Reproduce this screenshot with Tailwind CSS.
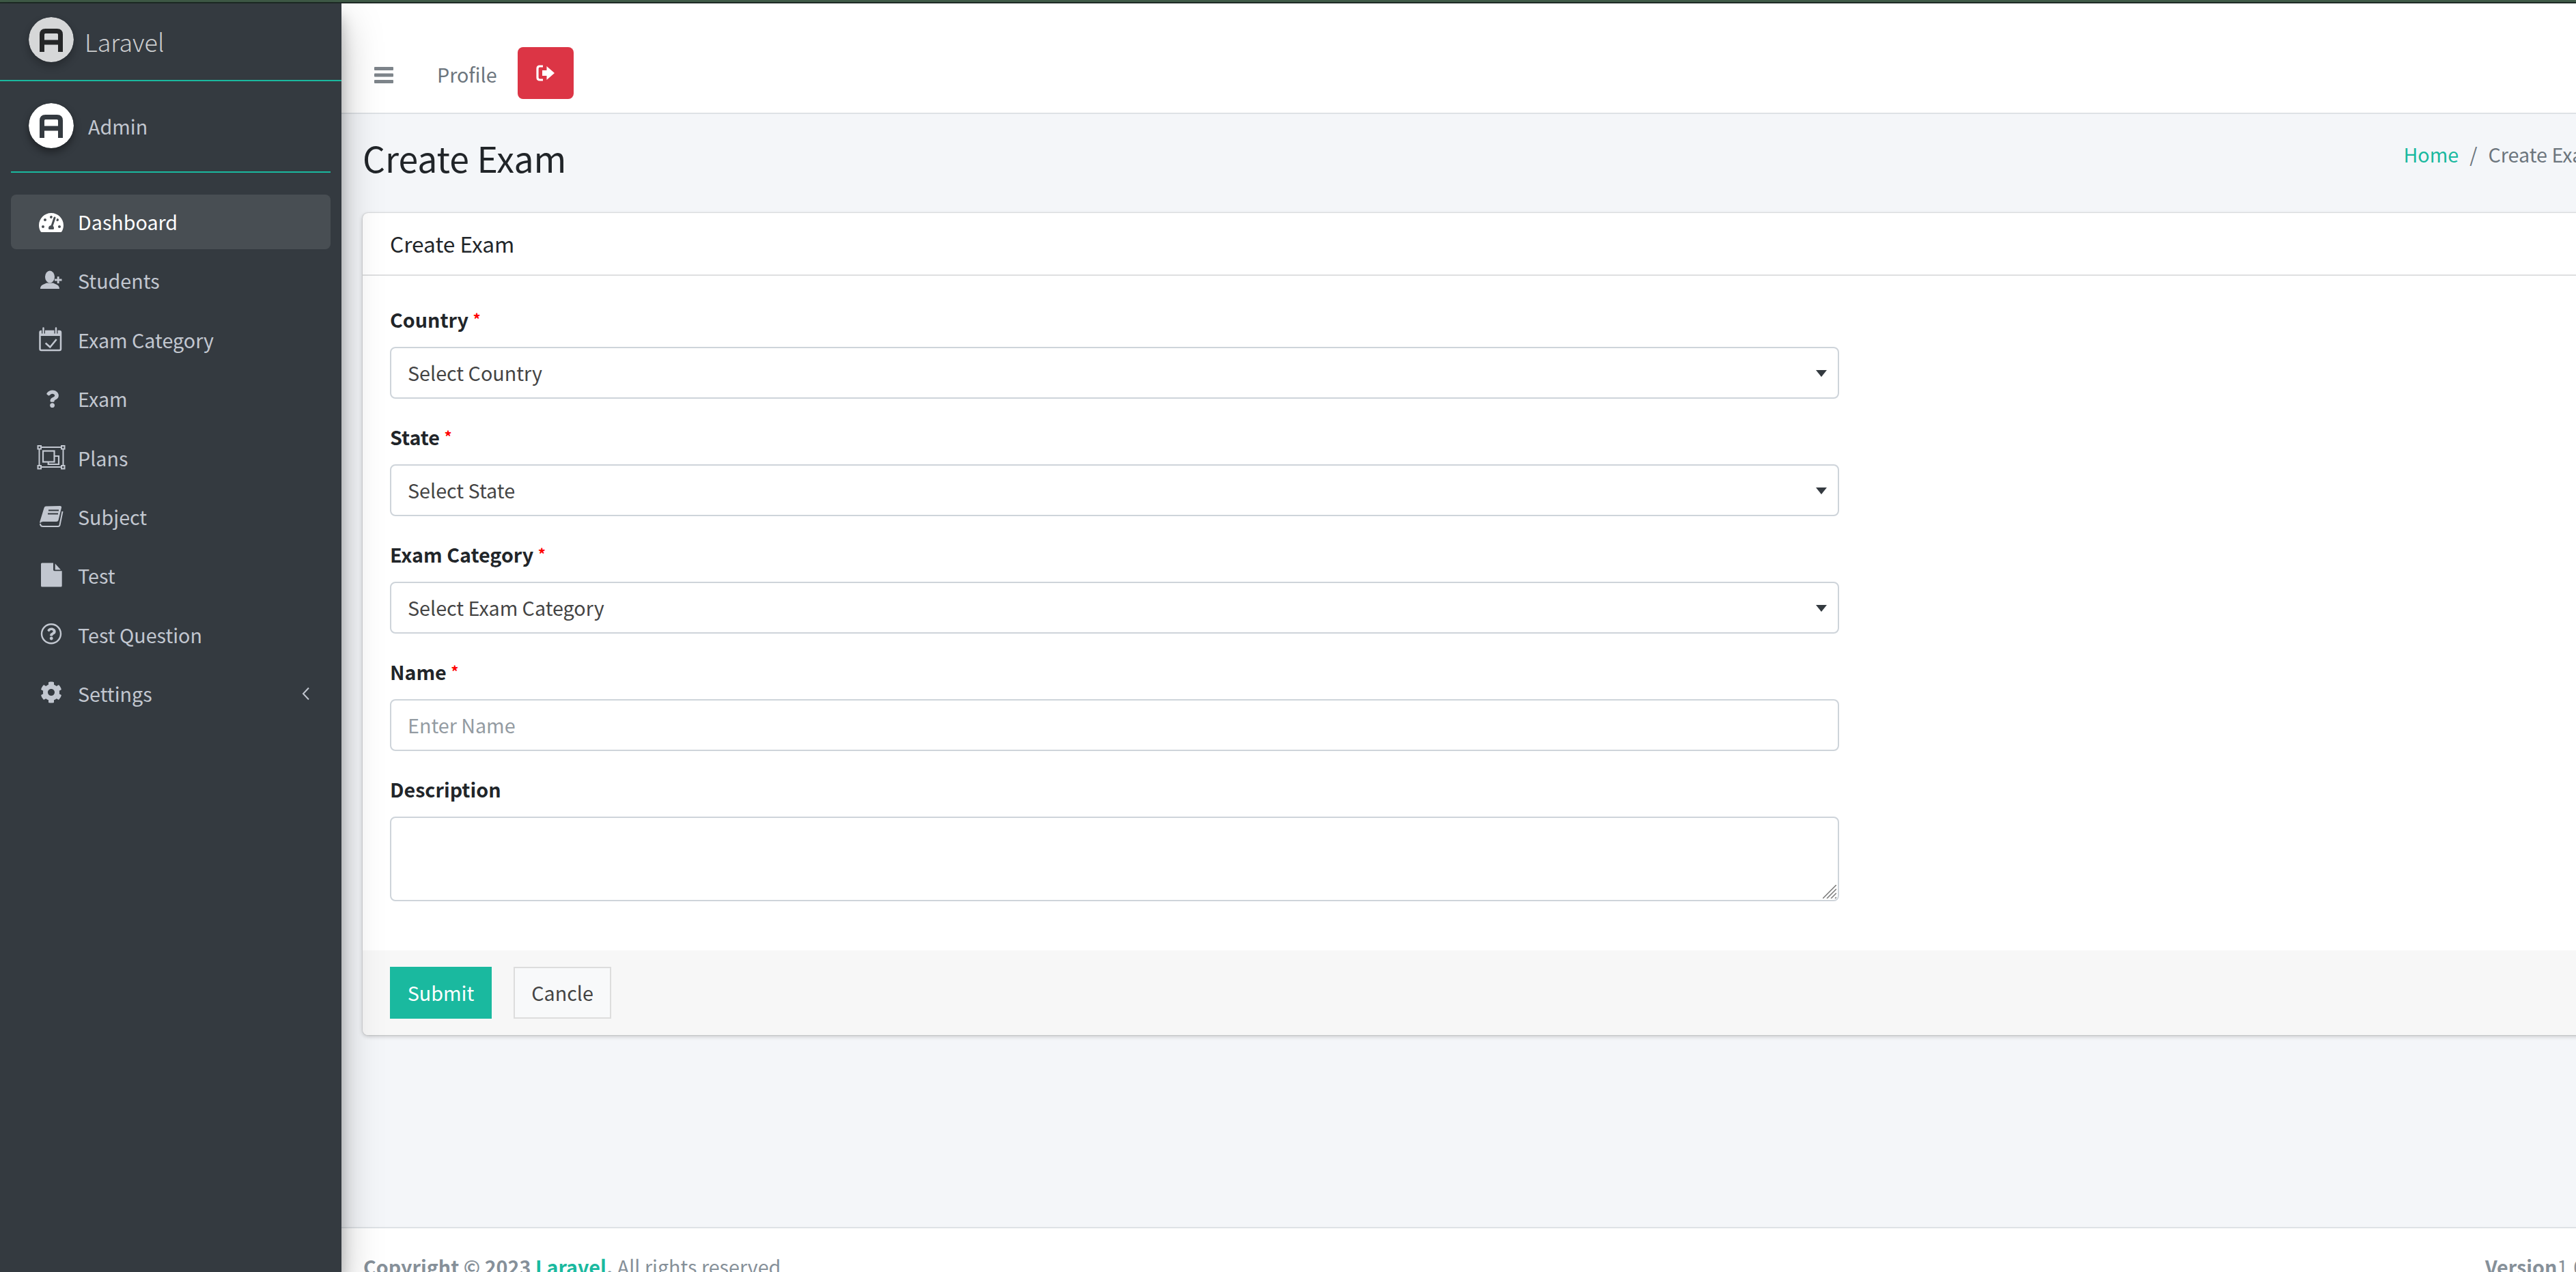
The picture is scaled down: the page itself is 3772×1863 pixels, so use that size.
<!DOCTYPE html>
<html lang="en">

<head>
  <meta charset="UTF-8">
  <meta name="viewport" content="width=device-width, initial-scale=1.0">
  <title>Create Exam</title>
  <script src="https://cdn.jsdelivr.net/npm/@tailwindcss/browser@4"></script>
</head>

<body class="h-[1863px] overflow-hidden bg-white font-['Noto_Sans_CJK_SC','Noto_Sans',sans-serif] text-[28.7px] leading-[48px] text-[#212529]">
  <!-- strip of the browser above the page -->
  <div class="h-[3px] bg-[#3f5a47]"></div>
  <div class="h-[2px] bg-[#1e2a25]"></div>

  <div class="flex h-[1858px] w-[3840px]">
    <!-- sidebar -->
    <aside class="relative z-10 w-[500px] shrink-0 bg-[#343a40] shadow-[0_28px_56px_rgba(0,0,0,.25),0_20px_20px_rgba(0,0,0,.22)]">
      <div class="flex h-[114px] items-center border-b-2 border-[#1ab99f] pl-[42px] pb-[6px]">
        <svg class="size-[66px] rounded-full opacity-80 shadow-[0_6px_12px_rgba(0,0,0,.3)]" viewBox="0 0 66 66">
          <circle cx="33" cy="33" r="33" fill="#fff" />
          <path d="M19.5 51V25.5q0-5 5-5h17q5 0 5 5V51M19.5 37h27" fill="none" stroke="#222" stroke-width="7" />
        </svg>
        <span class="ml-[16px] mt-[3px] text-[35.9px] font-light text-white/75">Laravel</span>
      </div>

      <div class="mx-[16px] flex h-[134px] items-center border-b-2 border-[#1ab99f] pb-[2px] pl-[26px]">
        <svg class="size-[66px] rounded-full shadow-[0_6px_12px_rgba(0,0,0,.4)]" viewBox="0 0 66 66">
          <circle cx="33" cy="33" r="33" fill="#fff" />
          <path d="M19.5 51V25.5q0-5 5-5h17q5 0 5 5V51M19.5 37h27" fill="none" stroke="#343a40" stroke-width="7" />
        </svg>
        <span class="ml-[21px] mt-[2px] text-[#c2c7d0]">Admin</span>
      </div>

      <nav class="mt-[32px] flex flex-col gap-[6.4px] px-[16px] text-[#c2c7d0]">
        <a class="flex h-[80px] items-center rounded-lg bg-white/10 pl-[33px] text-white">
          <svg class="mr-[13px] h-[48px] w-[52px]" viewBox="0 0 52 48" fill="#fff">
            <path transform="translate(8 9) scale(.0625)" d="M288 32C128.94 32 0 160.94 0 320c0 52.8 14.25 102.26 39.06 144.8 5.61 9.62 16.3 15.2 27.44 15.2h443c11.14 0 21.83-5.58 27.44-15.2C561.75 422.26 576 372.8 576 320c0-159.06-128.94-288-288-288zm0 64c14.71 0 26.58 10.13 30.32 23.65-1.11 2.26-2.64 4.23-3.45 6.67l-9.22 27.67c-5.13 3.49-10.97 6.01-17.64 6.01-17.67 0-32-14.33-32-32S270.33 96 288 96zM96 384c-17.67 0-32-14.33-32-32s14.33-32 32-32 32 14.33 32 32-14.33 32-32 32zm48-160c-17.67 0-32-14.33-32-32s14.33-32 32-32 32 14.33 32 32-14.33 32-32 32zm246.77-72.41l-61.33 184C343.13 347.33 352 364.54 352 384c0 11.72-3.38 22.55-8.88 32H232.88c-5.5-9.45-8.88-20.28-8.88-32 0-33.94 26.5-61.43 59.9-63.59l61.34-184.01c4.17-12.56 17.73-19.45 30.36-15.17 12.57 4.19 19.35 17.79 15.17 30.36zm14.66 57.2l15.52-46.55c3.47-1.29 7.13-2.23 11.05-2.23 17.67 0 32 14.33 32 32s-14.33 32-32 32c-11.38-.01-20.89-6.28-26.57-15.22zM480 384c-17.67 0-32-14.33-32-32s14.33-32 32-32 32 14.33 32 32-14.33 32-32 32z" />
          </svg>
          Dashboard
        </a>
        <a class="flex h-[80px] items-center rounded-lg pl-[33px]">
          <svg class="mr-[13px] h-[48px] w-[52px]" viewBox="0 0 52 48" fill="#c2c7d0">
            <ellipse cx="24" cy="18.500" rx="7" ry="9" />
            <path d="M10 36c0-5 3.500-6 9-8.500h10c5.500 2.500 9 3.500 9 8.500z" />
            <path d="M31 23h10.500M36.200 18v10" stroke="#c2c7d0" stroke-width="2.800" />
          </svg>
          Students
        </a>
        <a class="flex h-[80px] items-center rounded-lg pl-[33px]">
          <svg class="mr-[13px] h-[48px] w-[52px]" viewBox="0 0 52 48" fill="none" stroke="#c2c7d0" stroke-width="2.500">
            <rect x="9.500" y="11" width="30.500" height="28" rx="2" />
            <rect x="9.500" y="11" width="30.500" height="7" fill="#c2c7d0" stroke="none" />
            <path d="M14.500 6.500v8M33 6.500v8" stroke="#343a40" stroke-width="5" />
            <path d="M14.500 6.500v8M33 6.500v8" stroke-width="2.500" stroke-linecap="round" />
            <path d="M17.700 28.500l6.600 6 9.400-11.500" />
          </svg>
          Exam Category
        </a>
        <a class="flex h-[80px] items-center rounded-lg pl-[33px]">
          <svg class="mr-[13px] h-[48px] w-[52px]" viewBox="0 0 52 48" fill="#c2c7d0">
            <path transform="translate(18 11.500) scale(.05)" d="M202.021 0C122.202 0 70.503 32.703 29.914 91.026c-7.363 10.58-5.093 25.086 5.178 32.874l43.138 32.709c10.373 7.865 25.132 6.026 33.253-4.148 25.049-31.381 43.63-49.449 82.757-49.449 30.764 0 68.816 19.799 68.816 49.631 0 22.552-18.617 34.134-48.993 51.164-35.423 19.86-82.299 44.576-82.299 106.405V320c0 13.255 10.745 24 24 24h72.471c13.255 0 24-10.745 24-24v-5.773c0-42.86 125.268-44.645 125.268-160.627C377.504 66.256 286.902 0 202.021 0zM192 373.459c-38.196 0-69.271 31.075-69.271 69.271 0 38.195 31.075 69.27 69.271 69.27s69.271-31.075 69.271-69.271-31.075-69.27-69.271-69.27z" />
          </svg>
          Exam
        </a>
        <a class="flex h-[80px] items-center rounded-lg pl-[33px]">
          <svg class="mr-[13px] h-[48px] w-[52px]" viewBox="0 0 52 48" fill="none" stroke="#c2c7d0" stroke-width="2">
            <path d="M11 8h30M11 37h30M8.500 10.500v24M43.500 10.500v24" />
            <rect x="6.500" y="6" width="4.500" height="4.500" />
            <rect x="41" y="6" width="4.500" height="4.500" />
            <rect x="6.500" y="35" width="4.500" height="4.500" />
            <rect x="41" y="35" width="4.500" height="4.500" />
            <rect x="14" y="13.500" width="16.500" height="16" stroke-width="2.200" />
            <path d="M30.500 21H37v12H21.700v-3.500" stroke-width="2.200" />
          </svg>
          Plans
        </a>
        <a class="flex h-[80px] items-center rounded-lg pl-[33px]">
          <svg class="mr-[13px] h-[48px] w-[52px]" viewBox="0 0 52 48" fill="#c2c7d0">
            <path d="M18 8.500L39 8q2.500 0 2 2.500L36.500 29q-.5 2-3 2H14q-2.500 0-4 2h-.5q-.5-2 .5-4l5.500-18q.5-2.500 2.500-2.500z" />
            <path d="M10 34q0 4 4 4h22q2 0 2.500-2l4-20" fill="none" stroke="#c2c7d0" stroke-width="2" />
            <path d="M22 14.500h15M21 19.500h15" stroke="#343a40" stroke-width="2" />
          </svg>
          Subject
        </a>
        <a class="flex h-[80px] items-center rounded-lg pl-[33px]">
          <svg class="mr-[13px] h-[48px] w-[52px]" viewBox="0 0 52 48" fill="#c2c7d0">
            <path d="M12.500 5.600H29v10q0 1.700 1.700 1.700h11V39q0 1.600-1.600 1.600H12.500q-1.500 0-1.500-1.600V7.100q0-1.500 1.500-1.500z" />
            <path d="M31.700 6.600l8.300 9h-8.300z" />
          </svg>
          Test
        </a>
        <a class="flex h-[80px] items-center rounded-lg pl-[33px]">
          <svg class="mr-[13px] h-[48px] w-[52px]" viewBox="0 0 52 48" fill="#c2c7d0">
            <circle cx="26" cy="22.200" r="14" fill="none" stroke="#c2c7d0" stroke-width="2.400" />
            <path transform="translate(19.500 13.500) scale(.035)" d="M202.021 0C122.202 0 70.503 32.703 29.914 91.026c-7.363 10.58-5.093 25.086 5.178 32.874l43.138 32.709c10.373 7.865 25.132 6.026 33.253-4.148 25.049-31.381 43.63-49.449 82.757-49.449 30.764 0 68.816 19.799 68.816 49.631 0 22.552-18.617 34.134-48.993 51.164-35.423 19.86-82.299 44.576-82.299 106.405V320c0 13.255 10.745 24 24 24h72.471c13.255 0 24-10.745 24-24v-5.773c0-42.86 125.268-44.645 125.268-160.627C377.504 66.256 286.902 0 202.021 0zM192 373.459c-38.196 0-69.271 31.075-69.271 69.271 0 38.195 31.075 69.27 69.271 69.27s69.271-31.075 69.271-69.271-31.075-69.27-69.271-69.27z" />
          </svg>
          Test Question
        </a>
        <a class="flex h-[80px] items-center rounded-lg pl-[33px]">
          <svg class="mr-[13px] h-[48px] w-[52px]" viewBox="0 0 52 48" fill="#c2c7d0">
            <path transform="translate(10 6) scale(.0625)" d="M487.4 315.7l-42.6-24.6c4.3-23.2 4.3-47 0-70.2l42.6-24.6c4.9-2.8 7.1-8.6 5.5-14-11.1-35.6-30-67.8-54.7-94.6-3.8-4.1-10-5.1-14.8-2.3L380.8 110c-17.9-15.4-38.5-27.3-60.8-35.1V25.8c0-5.6-3.9-10.5-9.4-11.7-36.7-8.2-74.3-7.8-109.2 0-5.5 1.2-9.4 6.1-9.4 11.7V75c-22.2 7.9-42.8 19.8-60.8 35.1L88.7 85.5c-4.9-2.8-11-1.9-14.8 2.3-24.7 26.7-43.6 58.9-54.7 94.6-1.7 5.4.6 11.2 5.5 14L67.3 221c-4.3 23.2-4.3 47 0 70.2l-42.6 24.6c-4.9 2.8-7.1 8.6-5.5 14 11.1 35.6 30 67.8 54.7 94.6 3.8 4.1 10 5.1 14.8 2.3l42.6-24.6c17.9 15.4 38.5 27.3 60.8 35.1v49.2c0 5.6 3.9 10.5 9.4 11.7 36.7 8.2 74.3 7.8 109.2 0 5.5-1.2 9.4-6.1 9.4-11.7v-49.2c22.2-7.9 42.8-19.8 60.8-35.1l42.6 24.6c4.9 2.8 11 1.9 14.8-2.3 24.7-26.7 43.6-58.9 54.7-94.6 1.5-5.5-.7-11.3-5.6-14.1zM256 336c-44.1 0-80-35.9-80-80s35.9-80 80-80 80 35.9 80 80-35.9 80-80 80z" />
          </svg>
          Settings
          <svg class="ml-auto mr-[30px] h-[20px] w-[12px]" viewBox="0 0 12 20" fill="none" stroke="#c2c7d0" stroke-width="2">
            <path d="M10 1.500L2 10l8 8.500" />
          </svg>
        </a>
      </nav>
    </aside>

    <!-- main column -->
    <main class="flex min-w-0 flex-1 flex-col bg-[#f4f6f9]">
      <header class="flex h-[162px] shrink-0 items-start border-b-2 border-[#dee2e6] bg-white pl-[48px] pt-[64px] text-[#6c757d]">
        <div class="flex h-[76px] items-center">
          <svg class="mt-[6px] h-[24px] w-[28px]" viewBox="0 0 28 24" fill="#7d848a">
            <rect y="0" width="28" height="5" rx="1" />
            <rect y="9.500" width="28" height="5" rx="1" />
            <rect y="19" width="28" height="5" rx="1" />
          </svg>
          <a class="ml-[64px] mt-[4px]">Profile</a>
          <button class="ml-[30px] flex h-[76px] w-[82px] items-center justify-center rounded-lg bg-[#dc3545]">
            <svg class="h-[24px] w-[28px]" viewBox="0 0 28 24">
              <path d="M10 2H5.500Q2 2 2 5.500v13Q2 22 5.500 22H10" fill="none" stroke="#fff" stroke-width="3.200" />
              <path d="M9 8h6.500V2L27 12 15.500 22v-6H9z" fill="#fff" />
            </svg>
          </button>
        </div>
      </header>

      <div class="flex-1 px-[31px]">
        <div class="flex h-[145px] items-start justify-between">
          <h1 class="mt-[29px] text-[51.7px] leading-[69px]">Create Exam</h1>
          <ol class="mt-[35px] flex text-[#6c757d]">
            <li class="text-[#1ab99f]">Home</li>
            <li class="px-[16px]">/</li>
            <li>Create Exam</li>
          </ol>
        </div>

        <section class="rounded-lg bg-white shadow-[0_0_2px_rgba(0,0,0,.25),0_2px_6px_rgba(0,0,0,.2)]">
          <div class="flex h-[92px] items-center border-b-2 border-[#dedfe1] pb-[2px] pl-[40px] text-[31.6px]">Create Exam</div>
          <form>
            <div class="w-[2202px] px-[40px] pb-[40px] pt-[40px]">
              <div class="mb-[32px]">
                <label class="mb-[16px] block h-[48px] leading-[45px] font-bold">Country <span class="align-[4px] text-[22px] text-[#f00]">*</span></label>
                <div class="relative">
                  <select class="h-[76px] w-full appearance-none rounded-lg border-2 border-[#ced4da] bg-white pl-[24px] text-[#444]">
                    <option>Select Country</option>
                  </select>
                  <span class="absolute right-[18px] top-[34px] border-x-[8px] border-t-[10px] border-x-transparent border-t-[#343a40]"></span>
                </div>
              </div>
              <div class="mb-[32px]">
                <label class="mb-[16px] block h-[48px] leading-[45px] font-bold">State <span class="align-[4px] text-[22px] text-[#f00]">*</span></label>
                <div class="relative">
                  <select class="h-[76px] w-full appearance-none rounded-lg border-2 border-[#ced4da] bg-white pl-[24px] text-[#444]">
                    <option>Select State</option>
                  </select>
                  <span class="absolute right-[18px] top-[34px] border-x-[8px] border-t-[10px] border-x-transparent border-t-[#343a40]"></span>
                </div>
              </div>
              <div class="mb-[32px]">
                <label class="mb-[16px] block h-[48px] leading-[45px] font-bold">Exam Category <span class="align-[4px] text-[22px] text-[#f00]">*</span></label>
                <div class="relative">
                  <select class="h-[76px] w-full appearance-none rounded-lg border-2 border-[#ced4da] bg-white pl-[24px] text-[#444]">
                    <option>Select Exam Category</option>
                  </select>
                  <span class="absolute right-[18px] top-[34px] border-x-[8px] border-t-[10px] border-x-transparent border-t-[#343a40]"></span>
                </div>
              </div>
              <div class="mb-[32px]">
                <label class="mb-[16px] block h-[48px] leading-[45px] font-bold">Name <span class="align-[4px] text-[22px] text-[#f00]">*</span></label>
                <input type="text" placeholder="Enter Name" class="block h-[76px] w-full rounded-lg border-2 border-[#ced4da] bg-white pb-[2px] pl-[24px] placeholder:text-[#939ba2]">
              </div>
              <div class="mb-[32px]">
                <label class="mb-[16px] block h-[48px] font-bold">Description</label>
                <div class="relative">
                  <textarea class="block h-[124px] w-full resize-none rounded-lg border-2 border-[#ced4da] bg-white"></textarea>
                  <svg class="absolute bottom-[4px] right-[4px] size-[20px]" viewBox="0 0 20 20" fill="none" stroke="#777" stroke-width="1.500">
                    <path d="M0 20L20 0M6 20L20 6M12 20l8-8M18 20l2-2" />
                  </svg>
                </div>
              </div>
            </div>
            <div class="flex h-[124px] items-center gap-[32px] rounded-b-lg bg-[#f7f7f7] pl-[40px]">
              <button type="button" class="h-[76px] w-[149px] bg-[#1ab99f] text-white">Submit</button>
              <button type="button" class="h-[76px] w-[143px] border-2 border-[#ddd] bg-[#f8f9fa] text-[#444]">Cancle</button>
            </div>
          </form>
        </section>
      </div>

      <footer class="flex h-[66px] shrink-0 justify-between border-t-2 border-[#dee2e6] bg-white px-[32px] pt-[32px] text-[#869099]">
        <div><b>Copyright © 2023 <a class="text-[#1ab99f]">Laravel</a>.</b> All rights reserved</div>
        <div><b>Version</b>1.0.0</div>
      </footer>
    </main>
  </div>
</body>

</html>
